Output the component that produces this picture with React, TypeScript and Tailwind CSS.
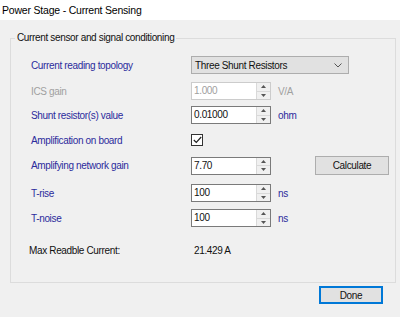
import React from 'react'

const font = { fontFamily: '"Liberation Sans", Arial, sans-serif' }

function Spinner() {
  return (
    <div className="flex w-[14px] flex-col border-l border-[#d9d9d9] bg-[#f0f0f0]">
      <div className="flex flex-1 items-center justify-center border-b border-[#d9d9d9]">
        <svg width="5" height="3" viewBox="0 0 5 3"><path d="M0 3 L2.5 0 L5 3 Z" fill="#555" /></svg>
      </div>
      <div className="flex flex-1 items-center justify-center">
        <svg width="5" height="3" viewBox="0 0 5 3"><path d="M0 0 L2.5 3 L5 0 Z" fill="#555" /></svg>
      </div>
    </div>
  )
}

function NumBox({ value, disabled }: { value: string; disabled?: boolean }) {
  return (
    <div
      className={`flex h-[18px] w-[80px] border bg-white ${
        disabled ? 'border-[#cccccc] text-[#a0a0a0]' : 'border-[#7a7a7a] text-[#111]'
      }`}
    >
      <div className="flex-1 pl-[2px] leading-[16px]">{value}</div>
      <Spinner />
    </div>
  )
}

function Row({ label, children, className = '', muted }: { label: string; children: React.ReactNode; className?: string; muted?: boolean }) {
  return (
    <div className={`flex h-[18px] items-center ${className}`}>
      <div className={`w-[160px] shrink-0 ${muted ? 'text-[#a0a0a0]' : 'text-[#2b2b9c]'}`}>{label}</div>
      <div className="flex items-center">{children}</div>
    </div>
  )
}

function Unit({ children, muted }: { children: React.ReactNode; muted?: boolean }) {
  return <span className={`ml-[7px] ${muted ? 'text-[#a0a0a0]' : 'text-[#2b2b9c]'}`}>{children}</span>
}

export default function App() {
  return (
    <div className="h-[317px] w-[400px] overflow-hidden bg-[#f0f0f0] text-[10px] tracking-[-0.35px] text-[#111]" style={font}>
      <div className="h-[20px] bg-white pl-[2px] pt-[3px] text-[10.5px] leading-[14px] tracking-[-0.2px] text-black">
        Power Stage - Current Sensing
      </div>

      <fieldset className="m-0 ml-[10px] mt-[11px] h-[252px] w-[386px] border border-[#dcdcdc] px-0 pb-0 pt-[11px]">
        <legend className="ml-[4px] px-[2px] leading-[14px] text-[#111]">Current sensor and signal conditioning</legend>
        <div className="flex flex-col pl-[20px]">
          <Row label="Current reading topology">
            <div className="flex h-[18px] w-[158px] items-center justify-between border border-[#adadad] bg-[#e1e1e1] pl-[3px] pr-[6px]">
              <span>Three Shunt Resistors</span>
              <svg width="8" height="5" viewBox="0 0 8 5"><path d="M0.5 0.5 L4 4 L7.5 0.5" fill="none" stroke="#555" strokeWidth="1" /></svg>
            </div>
          </Row>
          <Row label="ICS gain" muted className="mt-[8px]">
            <NumBox value="1.000" disabled />
            <Unit muted>V/A</Unit>
          </Row>
          <Row label="Shunt resistor(s) value" className="mt-[6px]">
            <NumBox value="0.01000" />
            <Unit>ohm</Unit>
          </Row>
          <Row label="Amplification on board" className="mt-[7px]">
            <div className="flex h-[12px] w-[12px] items-center justify-center border border-[#333] bg-white">
              <svg width="9" height="8" viewBox="0 0 9 8"><path d="M0.8 4 L3.3 6.5 L8.2 1" fill="none" stroke="#222" strokeWidth="1.2" /></svg>
            </div>
          </Row>
          <div className="mt-[7px] flex items-center">
            <Row label="Amplifying network gain">
              <NumBox value="7.70" />
            </Row>
            <button className="ml-[44px] h-[19px] w-[74px] border border-[#adadad] bg-[#e1e1e1] text-[#111]">Calculate</button>
          </div>
          <Row label="T-rise" className="mt-[9px]">
            <NumBox value="100" />
            <Unit>ns</Unit>
          </Row>
          <Row label="T-noise" className="mt-[7px]">
            <NumBox value="100" />
            <Unit>ns</Unit>
          </Row>
          <div className="mt-[14px] flex h-[18px] items-center">
            <div className="-ml-[2px] w-[165px] text-[#111]">Max Readble Current:</div>
            <div className="text-[#111]">21.429 A</div>
          </div>
        </div>
      </fieldset>

      <div className="flex justify-end pr-[17px] pt-[3px]">
        <button className="h-[18px] w-[64px] border-2 border-[#0078d7] bg-[#e1e1e1] text-[#111]">Done</button>
      </div>
    </div>
  )
}
